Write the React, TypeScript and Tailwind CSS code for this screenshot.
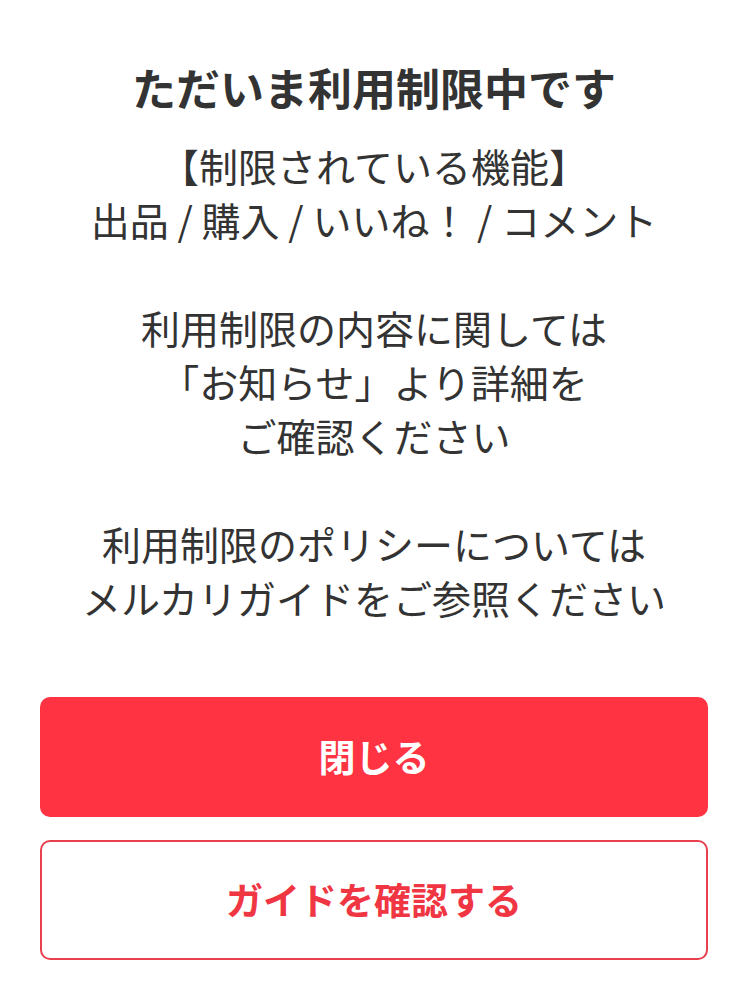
import React from "react";

export default function App() {
  const font = { fontFamily: '"Noto Sans CJK JP", "Noto Sans", sans-serif' };
  return (
    <div className="w-full min-h-[999px] bg-white flex flex-col items-stretch pl-10 pr-[38px]" style={font}>
      <h1 className="mt-[55px] text-center text-[44px] leading-[64px] font-bold text-[#333333]">
        ただいま利用制限中です
      </h1>
      <p className="mt-[19px] text-center text-[39px] leading-[54px] text-[#333333]">
        【制限されている機能】
        <br />
        出品 / 購入 / いいね！ / コメント
        <br />
        <br />
        利用制限の内容に関しては
        <br />
        「お知らせ」より詳細を
        <br />
        ご確認ください
        <br />
        <br />
        利用制限のポリシーについては
        <br />
        メルカリガイドをご参照ください
      </p>
      <button className="mt-[73px] h-[120px] w-full rounded-[10px] bg-[#ff3341] text-white text-[37px] font-bold">
        閉じる
      </button>
      <button className="mt-[23px] h-[120px] w-full rounded-[10px] border-2 border-[#e8404f] bg-white text-[#f03543] text-[37px] font-bold">
        ガイドを確認する
      </button>
    </div>
  );
}
